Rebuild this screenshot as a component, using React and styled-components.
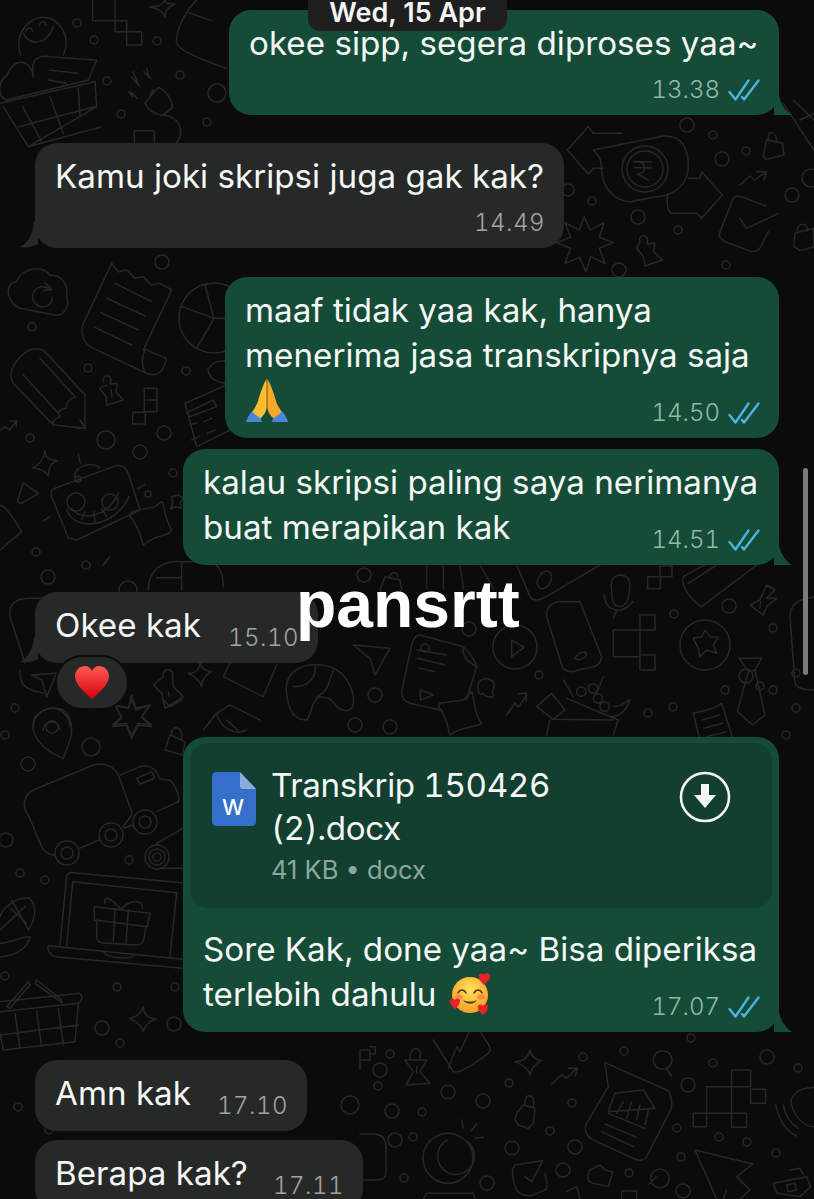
import React from 'react';
import styled, { createGlobalStyle } from 'styled-components';

const GlobalStyle = createGlobalStyle`
    html, body {
        margin: 0;
        padding: 0;
        background: #0b0b0b;
    }
`;

// zoomed-in outlines, each group is [x, y, paths] at 3x of the page
const doodleGroups = [
    [0, 0, [
        'M62 165 C40 100 90 50 130 52 C180 55 215 110 190 165',
        'M70 100 C90 140 140 135 160 80 M78 95 C80 80 95 80 98 95 M118 78 C120 62 135 62 138 75',
        'M100 230 C90 170 120 165 150 170 L290 180 L265 240 L20 300 C-10 290 -5 240 20 228 C40 170 90 175 100 230',
        'M148 210 L232 220 M145 240 L200 250 M0 310 L285 245 L290 320 L85 440 L10 320 M68 320 L125 425 M150 290 L190 400 M235 265 L240 345 M55 380 L285 320 M85 440 L305 380',
        'M278 0 L278 62 L345 62 L345 0 M345 62 L380 62 L380 95 L345 95 Z M380 95 L425 95 L425 135 L380 135 Z',
        'M400 215 L415 255 L395 232 L420 260 M440 205 L447 232 L432 215 L455 238 M385 275 L398 290 L392 275 L412 295',
        'M435 310 L475 262 C495 270 515 295 518 322 L490 345 C465 345 445 330 435 310 Z M450 285 L460 270 M488 345 C540 350 555 390 530 430',
        'M403 430 L403 392 L463 392 L463 430',
        'M455 20 C480 20 490 10 495 0 C495 15 510 10 525 12 C505 20 495 35 495 50 C490 35 475 25 448 20',
        'M590 0 C550 40 525 100 530 130 C540 155 620 185 680 205 M565 38 L635 62',
    ]],
    [0, 240, [
        'M60 205 C20 190 10 130 50 125 C60 90 120 70 150 105 C190 105 205 140 200 170 C210 200 190 230 165 225 Z',
        'M150 150 A30 30 0 1 0 158 172 M135 128 L155 148 L130 152',
        'M335 70 l20 25 l25 -5 l25 25 l25 -5 l25 25 l25 -5 l35 20 L430 330 M335 70 L250 250 C240 280 250 310 280 325 L440 400 C470 412 490 400 500 355 L435 328 C420 370 430 395 440 400',
        'M345 130 L455 185 M322 175 L435 228 M303 218 L415 270 M285 262 L395 315',
        'M615 135 L642 235 L545 200 M642 235 L590 325 M642 235 L700 235',
        'M35 420 C25 380 60 350 80 335 C100 320 125 325 140 340 L255 465 L255 565 L160 555 L40 430 Z M120 355 L225 470 M70 405 L175 520',
        'M225 470 C205 480 195 490 200 505 C180 505 170 520 180 530 C165 535 155 545 160 555 M240 540 L255 565 L230 565',
        'M310 425 a12 12 0 1 1 22 0 L330 432 L352 430 L347 455 L370 480 L320 495 L318 470 L298 445 L320 435 M333 450 L336 470',
        'M433 445 h38 v35 h-38 Z M433 480 h38 v35 h-38 Z M398 517 h38 v35 h-38 Z',
        'M0 570 L15 560 L28 570 L50 543 M30 543 L50 543 L48 560',
        'M135 632 C135 655 150 660 172 662 C150 668 145 685 145 708 C135 690 120 685 97 683 C120 675 130 660 135 632',
        'M70 728 L115 760 L65 790 C55 790 53 785 53 780 Z',
        'M165 745 L340 680 C360 672 375 680 385 700 L420 810 L230 900 L205 895 L155 770 C150 755 155 750 165 745',
        'M222 710 C225 680 275 660 300 685 M235 642 L240 668 M130 843 L150 830 M415 745 L435 733',
        'M200 810 C230 880 345 860 388 770 M215 805 C240 845 320 835 355 760 M245 838 L255 815 M285 845 L282 815 M320 830 L305 805',
        'M395 815 L465 800 L485 785 C495 790 490 830 515 870 C510 890 470 880 430 915 C420 880 410 850 390 830 Z',
        'M515 770 L535 765 L550 775 L540 790 L545 805 L525 800 L512 808 L518 788 Z',
        'M328 952 L310 975 M0 795 C20 800 50 850 65 875 L0 930',
        'M445 1050 C445 990 490 960 540 965 L620 965 C650 965 670 990 670 1040 M470 1013 L545 1013 M545 965 L545 1050',
        'M555 490 L690 430 M555 490 L590 620 L690 570 M625 395 C620 385 640 370 650 365 L690 360 M625 395 C630 415 650 430 690 430',
        'M560 518 L640 480 L650 500 L570 530 Z M570 555 L592 548 M612 545 L635 535 M622 580 L645 570 M575 600 L598 590',
    ]],
    [560, 100, [
        'M85 80 L22 150 L85 222 L100 205 L130 205 M85 80 L100 100 L185 100',
        'M100 150 L310 108 C360 105 385 140 385 195 C385 250 350 275 320 285 L210 305 C170 305 130 270 125 215 C125 180 120 170 100 150 Z',
        'M222 185 L275 185 M222 203 L275 203 M232 185 C262 185 262 222 232 222 L265 240',
        'M385 235 L420 235 L425 215 L487 285 L425 355 L410 340 L340 340 C325 340 320 325 322 285',
        'M620 120 L668 130 L672 165 L620 178 L610 170 Z M625 118 C620 90 650 90 650 125',
        'M540 255 L570 228 L585 240 L618 215 M590 215 L620 215 L612 240',
        'M618 318 L545 290 C520 285 515 300 510 320 L480 395 C475 410 480 415 495 425 L575 455 C590 455 600 450 605 435 L625 395',
        'M540 355 L560 385 L655 340',
        'M72 350 L90 390 L132 368 L118 412 L160 428 L118 445 L135 490 L92 470 L78 515 L58 472 L15 490 L32 445 L-10 428 L32 412 L15 368 L58 390 Z',
        'M705 400 L760 385 L762 440 L720 452 L702 440 Z M712 398 C708 365 745 365 742 392',
        'M240 425 a12 12 0 1 1 22 -2 L262 432 L285 430 L280 455 L308 480 L255 498 L250 470 L230 445 Z',
        'M670 10 L762 150 M700 0 L762 60 M720 60 L762 40',
    ]],
    [0, 580, [
        'M75 250 L30 110 C25 70 50 55 90 55 L150 55',
        'M60 270 C55 330 100 330 130 340 M95 285 L170 280 L140 350 L125 300 Z',
        'M565 280 C590 280 600 265 600 250 C605 265 620 275 635 275 C615 285 605 300 605 320 C600 300 585 290 565 280',
        'M670 290 L690 250 M670 290 L790 350 L830 255',
        'M490 290 a15 15 0 1 1 28 0 L520 320 L550 350 L495 385 L485 340 L460 315 Z M505 335 L508 350',
        'M860 340 C850 270 920 240 990 260 C1040 280 1065 330 1060 375 C1050 400 1030 395 1010 380 C1000 360 985 350 960 350 C930 365 940 395 920 420 C880 420 865 390 860 340 Z M945 255 C950 290 930 320 880 320 M1000 270 C985 310 985 335 950 350',
        'M395 345 L408 385 L450 375 L425 412 L455 440 L415 435 L395 475 L378 435 L338 440 L365 412 L345 375 L385 385 Z',
        'M610 450 L650 400 L690 375 L730 395 L780 420 M650 400 C660 440 700 470 740 450 M680 420 L712 450',
        'M155 380 m-55 60 a55 55 0 1 1 110 0 M130 450 a25 25 0 1 1 50 0',
    ]],
    [0, 700, [
        'M100 90 C90 40 150 10 190 30 C215 50 220 90 210 120 L190 175 C150 160 105 125 100 90 Z',
        'M100 270 L280 195 C320 185 345 205 355 225 L395 335 L395 345 L370 380 M100 270 C70 285 65 320 85 345 L125 440 C135 460 150 465 165 466',
        'M238 445 L298 420 M370 385 L398 375 M360 225 L420 200 C450 190 470 210 480 238 L510 240 C530 260 540 290 535 305 L470 335 M410 235 L455 215 L465 235 L420 252 Z',
        'M180 735 L200 530 C200 520 210 517 220 518 L548 548 M200 735 L218 545 L530 578 L510 770',
        'M145 737 L548 778 M145 737 C140 750 150 765 165 770 L548 805 M310 755 C320 775 390 780 405 765',
        'M283 620 L450 640 L442 680 L283 660 Z M290 660 L290 710 C290 725 305 730 320 730 L410 735 C425 735 430 725 432 715 L438 678',
        'M345 625 L340 725 M385 630 L378 730 M362 628 C340 600 310 580 315 610 M362 628 C390 600 425 595 428 625',
        'M0 905 L240 880 C250 890 245 905 235 910 L0 935 M235 915 L225 1025 L10 1050 L0 1000 M45 940 L60 1045 M110 935 L125 1040 M175 925 L190 1035 M0 1005 L235 975',
        'M20 920 L85 845 L90 855 L30 925 Z M110 840 L185 900 L185 908 L105 850 Z',
        'M0 650 C10 620 50 590 90 595 C110 620 110 650 85 690 M35 600 L85 690 M0 690 L75 620 M30 625 L80 670 M0 730 C30 730 60 710 90 710 C85 740 50 770 0 770',
        'M548 385 L470 430 M548 505 L480 505',
        'M430 920 C430 945 445 955 468 958 C445 965 435 975 430 995 C425 975 410 965 390 955 C410 950 425 940 430 920',
        'M495 150 L510 105 L555 125 L548 165 Z M515 105 C510 75 550 75 545 115',
        'M395 0 L408 30 L450 15 L425 50 L455 75 L415 70 L395 105 L378 70 L338 75 L365 50 L345 15 L385 25 Z',
        'M490 0 L510 20 L545 0',
    ]],
    [330, 560, [
        'M845 90 C840 60 850 45 875 45 C900 50 905 70 895 110 C890 140 870 145 855 135 C845 125 845 105 845 90 Z M822 105 C825 150 870 170 908 125 M860 150 L850 175',
        'M650 170 C645 140 670 125 690 125 L750 125 L815 290 C815 305 800 320 790 320 L725 335 C710 335 700 330 695 315 Z M735 295 C745 275 770 270 770 285 C765 295 745 305 735 295 Z',
        'M930 165 h45 v45 h-45 Z M850 210 h80 v80 h-80 Z M930 285 h45 v45 h-45 Z M930 210 L930 285',
        'M953 50 h38 v36 h-38 Z M990 18 h36 v32 h-36 Z',
        'M1090 235 L1115 230 L1125 210 L1140 230 L1165 232 L1150 255 L1160 280 L1130 270 L1110 290 L1105 265 Z',
        'M1228 295 L1295 295 L1275 330 L1305 465 L1268 495 L1222 455 L1255 335 Z M1255 335 L1275 330',
        'M545 240 L582 262 L545 290 Z',
        'M70 255 L180 265 L135 345 L120 295 Z',
        'M270 225 L400 260 C420 280 435 300 440 320 L410 420 M270 225 C255 225 250 240 245 255 L215 395 C215 415 225 425 240 430 L330 450',
        'M262 270 L350 285 M262 295 L345 315 M270 325 L315 335 M400 260 C395 285 410 305 440 320 M270 390 L310 405 L272 420 Z',
        'M330 430 L400 420 L425 395 C435 420 430 460 455 490 C440 505 400 495 360 525 C350 490 345 460 325 440 Z',
        'M445 370 C455 350 480 355 490 365 C500 385 480 395 490 400 C495 420 465 410 460 400 C445 410 440 385 445 370',
        'M530 465 L555 430 L565 442 L590 405 M565 402 L590 400 L588 425',
        'M620 440 L665 400 L705 450 L670 478 Z M665 478 L850 480 M710 415 L865 480 L850 525 M660 480 L650 525 M820 350 L800 400 M700 360 L730 410',
        'M740 395 a14 14 0 1 1 28 0 a14 14 0 1 1 -28 0 M775 385 a14 14 0 1 1 28 0 a14 14 0 1 1 -28 0 M790 415 a14 14 0 1 1 28 0 a14 14 0 1 1 -28 0 M810 440 a14 14 0 1 1 28 0 a14 14 0 1 1 -28 0 M850 440 C880 440 890 420 900 420 C890 450 870 470 840 470',
        'M1090 460 l20 -5 l20 -5 l20 -5 l25 -15 L1210 540 M1090 460 L1110 540 M1115 480 L1170 465 M1122 505 L1178 490 M1130 530 L1190 515',
        'M1060 50 L1150 0 M1060 50 C1050 80 1090 125 1115 140 L1300 0 M1075 70 L1160 15',
        'M1290 120 L1310 75 L1335 90 L1310 115 L1340 115 L1310 140 L1300 165 L1260 135 Z M1292 125 L1290 145',
        'M1380 170 C1380 130 1410 115 1452 110 M1380 170 L1395 370 C1400 385 1420 390 1452 390',
        'M560 15 L600 110 C610 125 625 120 640 115 L810 15 M620 70 C630 30 660 20 665 50 C660 85 630 100 620 70',
        'M290 15 L290 85 M340 15 L340 85 M390 15 L400 85 M450 15 L490 85',
        'M150 90 L165 50 L210 60 L215 90 L195 115 L165 115 Z M180 50 a12 12 0 1 1 24 0',
    ]],
    [360, 1030, [
        'M0 118 L0 60 L30 60 L30 90 L0 90 M30 50 h16 v22 h-16',
        'M135 90 L200 90 L180 125 L210 160 L138 165 L160 125 Z M150 90 C145 45 190 45 180 85 M170 110 L170 130',
        'M220 30 L280 125 C300 130 340 105 385 70 C395 60 390 50 380 35 L360 5 M265 115 L290 50 L300 65 L330 0',
        'M465 95 C490 95 505 80 510 60 C515 80 525 90 545 92 C525 100 515 115 510 135 C505 115 490 105 465 95',
        'M575 162 L605 135 L620 145 L650 115 M625 115 L652 115 L645 140',
        'M470 250 L490 225 L525 235 L520 280 L505 295 L475 285 L465 270 Z M495 225 C490 185 530 190 520 230',
        'M880 90 a28 28 0 1 1 56 0 a28 28 0 1 1 -56 0 M918 115 L935 138',
        'M735 98 L920 180 C935 190 940 225 930 245 L860 380 C855 390 840 395 820 385 L700 330 C680 320 670 300 680 280 L745 170 Z',
        'M765 190 L850 180 L885 235 L745 245 Z M790 215 L770 250 M815 215 L800 265 M840 225 L830 270 M865 240 L855 285 M745 250 L855 295',
        'M735 282 L830 322 M725 305 L820 350',
        'M1000 250 h40 v40 h-40 Z M1115 250 h45 v42 h-45 Z M1040 170 L1115 170 L1115 250 L1040 250 Z M1115 120 h57 v50 h-57 Z M1172 178 h45 v42 h-45 Z',
        'M1248 225 C1255 270 1280 305 1310 318 M1270 225 C1275 255 1290 280 1315 295 M1300 240 C1280 200 1310 175 1362 172 M1300 240 C1315 270 1335 290 1362 290',
        'M265 310 a75 75 0 1 1 -2 0 Z M262 330 a55 55 0 1 0 60 5 M305 270 L310 295 M350 280 L335 302 M370 322 L345 325',
        'M0 312 L45 312 C70 315 78 330 78 350 L78 430 C78 445 65 450 45 450 L0 450',
        'M465 405 L545 392 M465 405 C450 420 460 460 470 480 C480 495 505 500 520 495 L555 480 C565 475 560 450 555 430',
        'M495 440 L515 455 L548 392',
        'M690 420 C680 440 680 455 700 460 L745 470 L758 425 L735 420 L720 405 L690 420 Z',
        'M872 445 a28 28 0 1 1 56 0 a28 28 0 1 1 -56 0 M888 440 L868 462',
        'M1005 360 L1178 402 L1130 440 L1170 480 L1140 507 M1005 360 L1070 507 M1100 480 L1090 507',
        'M1240 460 L1340 440 L1352 470 L1320 500 L1250 490 Z M1290 420 L1320 415 L1330 435 M1280 465 L1305 460 L1310 480 L1285 485 Z',
        'M190 507 L200 490 L340 490 L345 507 M620 485 L650 470 L660 507 M785 507 V483 h45 V507',
    ]],
];

const doodleCircles = [
    [77, 23, 4], [94, 40, 4], [157, 41, 4], [107, 81, 4], [121, 114, 4], [180, 75, 4], [207, 122, 4], [217, 93, 9],
    [162, 262, 7], [32, 327, 4], [88, 368, 4], [186, 371, 4], [30, 438, 4], [106, 440, 9], [164, 433, 7], [140, 452, 7],
    [173, 473, 4], [36, 552, 4], [86, 565, 4], [48, 577, 7], [128, 590, 9], [78, 479, 3], [148, 494, 3],
    [687, 125, 7], [713, 135, 4], [746, 151, 4], [722, 159, 7], [568, 190, 6], [592, 201, 4], [638, 217, 7], [678, 230, 4],
    [792, 195, 7], [698, 302, 9], [726, 265, 4], [619, 270, 7], [811, 178, 9],
    [15, 708, 4], [5, 735, 4], [91, 747, 9], [28, 764, 7], [6, 840, 7], [129, 860, 4], [20, 873, 4], [45, 880, 4],
    [117, 987, 4], [175, 987, 4], [102, 1028, 7], [174, 1024, 7], [120, 1043, 4], [5, 976, 4],
    [364, 575, 7], [469, 629, 7], [375, 695, 7], [539, 675, 4], [674, 614, 4], [729, 606, 7], [773, 628, 4], [746, 676, 7],
    [773, 690, 4], [725, 690, 4], [760, 686, 4], [673, 707, 4], [648, 713, 4], [796, 673, 4], [796, 708, 4], [786, 735, 4],
    [355, 725, 7], [425, 648, 4], [390, 727, 7],
    [378, 1086, 4], [448, 1092, 7], [483, 1101, 7], [392, 1111, 7], [422, 1112, 4], [413, 1137, 4], [404, 1178, 4],
    [487, 1183, 7], [512, 1148, 7], [509, 1083, 4], [550, 1131, 4], [572, 1103, 4], [583, 1057, 4], [624, 1051, 4],
    [575, 1147, 7], [563, 1170, 7], [629, 1173, 4], [677, 1128, 4], [688, 1085, 7], [681, 1157, 4], [683, 1191, 7],
    [713, 1063, 4], [767, 1057, 7], [798, 1068, 4], [719, 1137, 4], [747, 1142, 4], [776, 1153, 4], [691, 1038, 4],
    [55, 1067, 4], [18, 1107, 4], [49, 1130, 4], [390, 1054, 4], [50, 1150, 4], [350, 1105, 9], [380, 1070, 7], [395, 1140, 7],
];

const ringCircles = [
    [214, 318, 35], [76, 502, 9], [110, 502, 8], [645, 169, 23], [645, 169, 18], [515, 647, 22], [705, 645, 25], [52, 727, 6],
    [67, 853, 12], [67, 853, 6], [111, 835, 12], [111, 835, 6], [145, 822, 12], [145, 822, 6],
    [157, 857, 12], [157, 857, 8], [157, 857, 4],
];

const DoubleCheck = () => (
    <TickIcon viewBox='0 0 32 22' fill='none' stroke='#4db5e4' strokeWidth='2.3' strokeLinecap='round' strokeLinejoin='round'>
        <path d='M1.5 13 L7.5 20.5 L20.5 1.5' />
        <path d='M14 18 L16 20.5 L30.5 1.5' />
    </TickIcon>
);

const PrayEmoji = () => (
    <EmojiIcon $size={44} viewBox='0 0 46 46'>
        <path d='M1 46 C3 39 7 34 12 31 L18 46 Z' fill='#4a86d8' />
        <path d='M45 46 C43 39 39 34 34 31 L28 46 Z' fill='#4a86d8' />
        <path d='M22.5 1 C19 6 15 19 13 26 C11 31 8 34 8 36 L16 42 C19 40 22 36 22.5 31 Z' fill='#fdbb2f' />
        <path d='M23.5 1 C27 6 31 19 33 26 C35 31 38 34 38 36 L30 42 C27 40 24 36 23.5 31 Z' fill='#f8a825' />
        <path d='M22.8 4 V32' stroke='#d98a1a' strokeWidth='1.2' />
    </EmojiIcon>
);

const HeartEmoji = () => (
    <EmojiIcon $size={36} viewBox='0 0 36 36'>
        <defs>
            <linearGradient id='heartFill' x1='0' y1='0' x2='0' y2='1'>
                <stop offset='0' stopColor='#ff5a52' />
                <stop offset='1' stopColor='#d8000f' />
            </linearGradient>
        </defs>
        <path d='M18 34 C9 26 1 19 1 11 C1 5 6 1 11 1 C14 1 17 3 18 6 C19 3 22 1 25 1 C30 1 35 5 35 11 C35 19 27 26 18 34 Z' fill='url(#heartFill)' />
    </EmojiIcon>
);

const LoveFaceEmoji = () => (
    <FaceSlot>
        <EmojiIcon $size={44} viewBox='0 0 44 44'>
            <defs>
                <radialGradient id='faceFill' cx='0.5' cy='0.35' r='0.7'>
                    <stop offset='0' stopColor='#ffe35c' />
                    <stop offset='1' stopColor='#f79a1f' />
                </radialGradient>
            </defs>
            <circle cx='21' cy='23' r='18' fill='url(#faceFill)' />
            <path d='M9 21 C11 17 15 17 17 21 M25 21 C27 17 31 17 33 21' fill='none' stroke='#5b3a12' strokeWidth='1.6' strokeLinecap='round' />
            <path d='M14 28 C17 33 25 33 28 28 C24 30 18 30 14 28 Z' fill='#5b3a12' />
            <ellipse cx='10' cy='25' rx='4' ry='2.5' fill='#f4685e' opacity='0.6' />
            <ellipse cx='32' cy='25' rx='4' ry='2.5' fill='#f4685e' opacity='0.6' />
            <path d='M35 13 C31 9 29 6 30 3 C31 1 34 1 35 3 C36 0.5 40 0.5 41 3 C42 7 38 10 35 13 Z' fill='#e8222d' />
            <path d='M6 37 C3 34 0 31 1 28 C2 26 5 26 6 28 C7 26 10 26 11 28 C11 32 9 34 6 37 Z' fill='#e8222d' />
            <path d='M34 43 C31 40 28 37 29 34 C30 32 33 32 34 34 C35 32 38 32 39 34 C39 38 37 40 34 43 Z' fill='#e8222d' />
        </EmojiIcon>
    </FaceSlot>
);

const WordIcon = () => (
    <svg width='44' height='54' viewBox='0 0 44 54'>
        <path d='M4 0 H28 L44 17 V50 C44 52 42 54 40 54 H4 C2 54 0 52 0 50 V4 C0 2 2 0 4 0 Z' fill='#356fca' />
        <path d='M28 0 L44 17 H31 C29 17 28 16 28 14 Z' fill='#8eabdf' />
        <text x='21' y='43' textAnchor='middle' fontFamily='Inter, sans-serif' fontWeight='500' fontSize='22' fill='#fff'>W</text>
    </svg>
);

const DownloadIcon = () => (
    <svg width='52' height='52' viewBox='0 0 52 52'>
        <circle cx='26' cy='26' r='24' fill='none' stroke='#f2f5f3' strokeWidth='2.6' />
        <path d='M22 13 H30 V24 H37 L26 37 L15 24 H22 Z' fill='#f2f5f3' />
    </svg>
);

const Meta = ({ time, read, stacked }) => (
    <MetaWrap $stacked={stacked}>
        <Time $read={read}>{time}</Time>
        {read && <DoubleCheck />}
    </MetaWrap>
);

const App = () => {
    return (
        <Page>
            <GlobalStyle />
            <DoodleLayer viewBox='0 0 814 1199' fill='none' stroke='#282828' strokeLinecap='round' strokeLinejoin='round'>
                {doodleGroups.map(([x, y, paths]) => (
                    <g key={`${x}-${y}`} transform={`translate(${x} ${y}) scale(0.3333)`} strokeWidth='4.5'>
                        {paths.map((d, i) => <path key={i} d={d} />)}
                    </g>
                ))}
                <g strokeWidth='1.5'>
                    {doodleCircles.concat(ringCircles).map(([cx, cy, r], i) => (
                        <circle key={i} cx={cx} cy={cy} r={r} />
                    ))}
                </g>
            </DoodleLayer>

            <Thread>
                <DateBadge>Wed, 15 Apr</DateBadge>

                <Bubble $me $w={550} $gap={0} $tail>
                    <MessageText>okee sipp, segera diproses yaa~</MessageText>
                    <MetaRow $stacked><Meta time='13.38' read stacked /></MetaRow>
                </Bubble>

                <Bubble $w={529} $gap={28} $tail>
                    <MessageText>Kamu joki skripsi juga gak kak?</MessageText>
                    <MetaRow $stacked><Meta time='14.49' stacked /></MetaRow>
                </Bubble>

                <Bubble $me $w={554} $gap={29}>
                    <MessageText>maaf tidak yaa kak, hanya<br />menerima jasa transkripnya saja</MessageText>
                    <MetaRow>
                        <EmojiLine><PrayEmoji /></EmojiLine>
                        <Meta time='14.50' read />
                    </MetaRow>
                </Bubble>

                <Bubble $me $w={596} $gap={11} $tail>
                    <MessageText>kalau skripsi paling saya nerimanya</MessageText>
                    <MetaRow>
                        <MessageText>buat merapikan kak</MessageText>
                        <Meta time='14.51' read />
                    </MetaRow>
                </Bubble>

                <Bubble $w={283} $gap={27} $tail>
                    <MetaRow>
                        <MessageText>Okee kak</MessageText>
                        <Meta time='15.10' />
                    </MetaRow>
                    <Reaction><HeartEmoji /></Reaction>
                </Bubble>

                <Bubble $me $w={596} $gap={74} $tail>
                    <FileCard>
                        <WordIcon />
                        <FileInfo>
                            <FileName>Transkrip 150426<br />(2).docx</FileName>
                            <FileMeta>41 KB • docx</FileMeta>
                        </FileInfo>
                        <DownloadSlot><DownloadIcon /></DownloadSlot>
                    </FileCard>
                    <MessageText>Sore Kak, done yaa~ Bisa diperiksa</MessageText>
                    <MetaRow>
                        <MessageText>terlebih dahulu<LoveFaceEmoji /></MessageText>
                        <Meta time='17.07' read />
                    </MetaRow>
                </Bubble>

                <Bubble $w={272} $gap={28}>
                    <MetaRow>
                        <MessageText>Amn kak</MessageText>
                        <Meta time='17.10' />
                    </MetaRow>
                </Bubble>

                <Bubble $w={328} $gap={9}>
                    <MetaRow>
                        <MessageText>Berapa kak?</MessageText>
                        <Meta time='17.11' />
                    </MetaRow>
                </Bubble>
            </Thread>

            <Caption>pansrtt</Caption>
            <ScrollThumb />
        </Page>
    );
};

export default App;

const Page = styled.div`
    position: relative;
    width: 814px;
    height: 1199px;
    overflow: hidden;
    background: #0b0b0b;
    font-family: Inter, "Liberation Sans", sans-serif;
`;

const DoodleLayer = styled.svg`
    position: absolute;
    inset: 0;
    width: 814px;
    height: 1199px;
`;

const Thread = styled.div`
    position: relative;
    display: flex;
    flex-direction: column;
    padding: 10px 35px 0;
`;

const DateBadge = styled.div`
    position: absolute;
    z-index: 2;
    top: 0;
    left: 308px;
    width: 199px;
    height: 31px;
    border-radius: 0 0 12px 12px;
    background: #1f1f1f;
    color: #f5f5f5;
    font-size: 27px;
    font-weight: 600;
    line-height: 26px;
    text-align: center;
    overflow: hidden;
`;

const Bubble = styled.div`
    position: relative;
    box-sizing: border-box;
    flex: none;
    width: ${props => props.$w}px;
    align-self: ${props => props.$me ? 'flex-end' : 'flex-start'};
    margin-top: ${props => props.$gap}px;
    padding: 11px 19px 3px 20px;
    border-radius: 22px;
    background: ${props => props.$me ? '#154c38' : '#272828'};

    &::after {
        content: '';
        display: ${props => props.$tail ? 'block' : 'none'};
        position: absolute;
        bottom: 0;
        width: 18px;
        height: 26px;
        background: inherit;
        ${props => props.$me ? `
            right: -13px;
            clip-path: path('M0 0 L4 0 C5 12 10 21 18 26 L0 26 Z');
        ` : `
            left: -15px;
            clip-path: path('M18 0 L14 0 C13 12 8 21 0 25 C6 26 12 25 18 22 Z');
        `}
    }
`;

const MessageText = styled.div`
    color: #f4f7f5;
    font-size: 33.2px;
    line-height: 45px;
    white-space: nowrap;
`;

const MetaRow = styled.div`
    display: flex;
    justify-content: ${props => props.$stacked ? 'flex-end' : 'space-between'};
    align-items: flex-start;
`;

const EmojiLine = styled.div`
    height: 45px;
`;

const MetaWrap = styled.div`
    display: flex;
    align-items: center;
    gap: 8px;
    height: 45px;
    margin-top: ${props => props.$stacked ? 1 : 12}px;
`;

const Time = styled.span`
    color: ${props => props.$read ? '#94b8a9' : '#a3a3a3'};
    font-size: 24px;
    font-weight: 300;
    font-variant-numeric: tabular-nums;
    letter-spacing: ${props => props.$read ? 0 : 0.5}px;
`;

const TickIcon = styled.svg`
    width: 32px;
    height: 22px;
    flex: none;
`;

const EmojiIcon = styled.svg`
    display: block;
    width: ${props => props.$size}px;
    height: ${props => props.$size}px;
`;

const FaceSlot = styled.span`
    display: inline-block;
    margin-left: 13px;
    vertical-align: -10px;
    line-height: 0;
`;

const Reaction = styled.div`
    position: absolute;
    left: 20px;
    top: 63px;
    display: flex;
    align-items: center;
    justify-content: center;
    width: 74px;
    height: 55px;
    box-sizing: border-box;
    border: 2px solid #0b0b0b;
    border-radius: 28px;
    background: #272828;
`;

const FileCard = styled.div`
    display: flex;
    align-items: flex-start;
    box-sizing: border-box;
    height: 165px;
    margin: -5px -12px 19px -13px;
    padding: 29px 41px 0 22px;
    border-radius: 18px;
    background: #123f2f;
`;

const FileInfo = styled.div`
    flex: 1;
    margin-left: 15px;
    margin-top: -8px;
`;

const FileName = styled.div`
    color: #f4f7f5;
    font-size: 33.2px;
    font-variant-numeric: tabular-nums;
    letter-spacing: -0.4px;
    line-height: 43px;
`;

const FileMeta = styled.div`
    margin-top: 5px;
    color: #8aa99c;
    font-size: 25.5px;
    line-height: 30px;
`;

const DownloadSlot = styled.div`
    margin-top: -1px;
`;

const Caption = styled.div`
    position: absolute;
    z-index: 3;
    left: 296px;
    top: 566px;
    color: #fff;
    font-family: "Liberation Sans", Arial, sans-serif;
    font-size: 66px;
    font-weight: 700;
    line-height: 76px;
`;

const ScrollThumb = styled.div`
    position: absolute;
    z-index: 3;
    left: 803px;
    top: 468px;
    width: 5px;
    height: 207px;
    border-radius: 3px;
    background: #7c7c7c;
`;
